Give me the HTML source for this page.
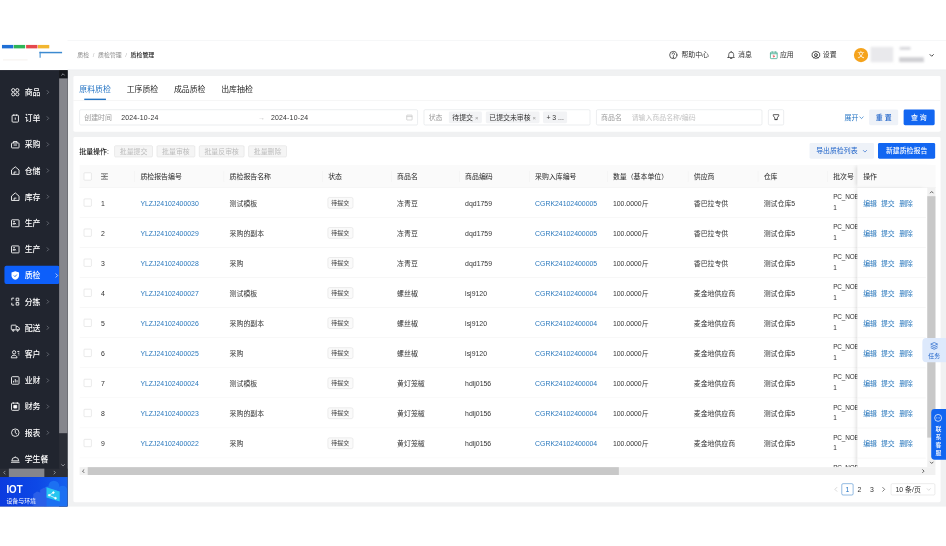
<!DOCTYPE html><html lang="zh-CN"><head><meta charset="utf-8"><title>质检管理</title><style>
*{box-sizing:border-box;margin:0;padding:0}
html,body{width:946px;height:546px;background:#fff;overflow:hidden}
body{font-family:"Liberation Sans","Noto Sans CJK SC",sans-serif;color:#333;position:relative}
#app{position:absolute;left:0;top:40px;width:1920px;height:947px;transform:scale(0.492708);transform-origin:0 0;background:#f0f1f2;overflow:hidden;font-size:14px}
.abs{position:absolute}
svg{display:block}
#side{position:absolute;left:0;top:0;width:137px;height:947px;background:#21252f}
#logo{position:absolute;left:0;top:0;width:138px;height:61px;background:#fff}
#hdr{position:absolute;left:137px;top:0;width:1783px;height:61px;background:#fff;border-bottom:1px solid #e8eaee;border-top:1px solid #eceef1}
.mi{position:absolute;left:9px;width:112px;height:37px;border-radius:4px;color:#fff;font-size:16px;font-weight:500}
.mi .ic{position:absolute;left:12px;top:9.5px;width:20px;height:20px}
.mi .tx{position:absolute;left:41px;top:2px;line-height:35px;white-space:nowrap}
.mi .ch{position:absolute;left:83px;top:14.5px;width:10px;height:10px}
.mi.on .ch{left:101px}
.mi.on{background:#0d5ffa}
.card{position:absolute;background:#fff;border-radius:3px}
.tab{position:absolute;top:15.5px;font-size:16px;line-height:24px;color:#222;white-space:nowrap}
.inp{position:absolute;top:68px;height:32px;border:1px solid #d9dce1;border-radius:3px;background:#fff}
.lbl{position:absolute;top:0;line-height:30px;color:#9a9a9a;font-size:14px;white-space:nowrap}
.val{position:absolute;top:0;line-height:30px;color:#333;font-size:14px;white-space:nowrap}
.tag{position:absolute;top:3px;height:24px;line-height:25px;background:#f2f3f5;border-radius:3px;font-size:14px;color:#333;padding:0 7px;white-space:nowrap}
.btn{position:absolute;height:32px;line-height:32px;border-radius:3px;text-align:center;font-size:14px;white-space:nowrap}
.dbtn{position:absolute;top:17px;height:24px;line-height:22px;border:1px solid #dcdcdc;background:#f5f5f5;color:#bdbdbd;border-radius:3px;text-align:center;font-size:14px;white-space:nowrap}
.th{position:absolute;top:1.5px;height:47px;line-height:47px;font-size:14px;color:#262626;font-weight:400;white-space:nowrap}
.sep{position:absolute;top:13px;width:1px;height:22px;background:#f0f0f0}
.row{position:absolute;left:0;width:1721px;height:61px;border-bottom:1px solid #eeeeee;background:#fff}
.td{position:absolute;top:2px;line-height:60px;font-size:14px;color:#333;white-space:nowrap}
.lk{color:#2a78bd}
.cb{position:absolute;width:16px;height:16px;border:1px solid #d4d4d4;border-radius:2px;background:#fff}
.st{position:absolute;top:19px;height:23px;line-height:21px;border:1px solid #dcdcdc;background:#fafafa;border-radius:4px;font-size:12px;color:#333;padding:0 7px;white-space:nowrap}
.hi{position:absolute;top:0;line-height:60px;font-size:14px;color:#333;white-space:nowrap}
</style></head><body><div id="app">
<div id="side">
<div class="mi" style="top:86.0px"><div class="ic"><svg width="20" height="20" viewBox="0 0 17 17" ><g stroke="#fff" stroke-width="1.5" fill="none" stroke-linejoin="round"><circle cx="5" cy="5" r="2.8"/><circle cx="12" cy="5" r="2.8"/><circle cx="5" cy="12" r="2.8"/><circle cx="12" cy="12" r="2.8"/></g></svg></div><div class="tx">商品</div><div class="ch"><svg width="10" height="10" viewBox="0 0 10 10" ><path d="M3 1l4 4-4 4" stroke="#7d818b" stroke-width="1.400" fill="none"/></svg></div></div>
<div class="mi" style="top:139.2px"><div class="ic"><svg width="20" height="20" viewBox="0 0 17 17" ><g stroke="#fff" stroke-width="1.5" fill="none" stroke-linejoin="round"><rect x="3" y="3" width="11" height="12" rx="1.5"/><path d="M6 1.5v3M11 1.5v3M8.5 7v4"/></g></svg></div><div class="tx">订单</div><div class="ch"><svg width="10" height="10" viewBox="0 0 10 10" ><path d="M3 1l4 4-4 4" stroke="#7d818b" stroke-width="1.400" fill="none"/></svg></div></div>
<div class="mi" style="top:192.4px"><div class="ic"><svg width="20" height="20" viewBox="0 0 17 17" ><g stroke="#fff" stroke-width="1.5" fill="none" stroke-linejoin="round"><rect x="2" y="6" width="13" height="8.5" rx="1"/><path d="M5.5 6V3.5h6V6M5.5 9.5h6"/></g></svg></div><div class="tx">采购</div><div class="ch"><svg width="10" height="10" viewBox="0 0 10 10" ><path d="M3 1l4 4-4 4" stroke="#7d818b" stroke-width="1.400" fill="none"/></svg></div></div>
<div class="mi" style="top:245.6px"><div class="ic"><svg width="20" height="20" viewBox="0 0 17 17" ><g stroke="#fff" stroke-width="1.5" fill="none" stroke-linejoin="round"><path d="M2 7.5L8.5 2 15 7.5V15H2z"/><path d="M6.5 15v-4h4"/></g></svg></div><div class="tx">仓储</div><div class="ch"><svg width="10" height="10" viewBox="0 0 10 10" ><path d="M3 1l4 4-4 4" stroke="#7d818b" stroke-width="1.400" fill="none"/></svg></div></div>
<div class="mi" style="top:298.8px"><div class="ic"><svg width="20" height="20" viewBox="0 0 17 17" ><g stroke="#fff" stroke-width="1.5" fill="none" stroke-linejoin="round"><path d="M2 7.5L8.5 2 15 7.5V15H2z"/><path d="M6.5 15v-4h4"/></g></svg></div><div class="tx">库存</div><div class="ch"><svg width="10" height="10" viewBox="0 0 10 10" ><path d="M3 1l4 4-4 4" stroke="#7d818b" stroke-width="1.400" fill="none"/></svg></div></div>
<div class="mi" style="top:352.0px"><div class="ic"><svg width="20" height="20" viewBox="0 0 17 17" ><g stroke="#fff" stroke-width="1.5" fill="none" stroke-linejoin="round"><rect x="2" y="2.5" width="13" height="12" rx="1"/><path d="M5 11V8l2.5 2V8l2.5 2"/><path d="M5 5.5h3"/></g></svg></div><div class="tx">生产</div><div class="ch"><svg width="10" height="10" viewBox="0 0 10 10" ><path d="M3 1l4 4-4 4" stroke="#7d818b" stroke-width="1.400" fill="none"/></svg></div></div>
<div class="mi" style="top:405.2px"><div class="ic"><svg width="20" height="20" viewBox="0 0 17 17" ><g stroke="#fff" stroke-width="1.5" fill="none" stroke-linejoin="round"><rect x="2" y="2.5" width="13" height="12" rx="1"/><path d="M5 11V8l2.5 2V8l2.5 2"/><path d="M5 5.5h3"/></g></svg></div><div class="tx">生产</div><div class="ch"><svg width="10" height="10" viewBox="0 0 10 10" ><path d="M3 1l4 4-4 4" stroke="#7d818b" stroke-width="1.400" fill="none"/></svg></div></div>
<div class="mi on" style="top:458.4px"><div class="ic"><svg width="20" height="20" viewBox="0 0 17 17" ><path d="M8.5 1L15 3.2v5.3c0 3.6-2.7 6.2-6.5 7.5C4.700 14.700 2 12.100 2 8.500V3.200z" fill="#fff"/><path d="M6 8.500l2 2 3.200-3.600" stroke="#1266f1" stroke-width="1.500" fill="none"/></svg></div><div class="tx">质检</div><div class="ch"><svg width="10" height="10" viewBox="0 0 10 10" ><path d="M3 1l4 4-4 4" stroke="#fff" stroke-width="1.400" fill="none"/></svg></div></div>
<div class="mi" style="top:511.6px"><div class="ic"><svg width="20" height="20" viewBox="0 0 17 17" ><g stroke="#fff" stroke-width="1.5" fill="none" stroke-linejoin="round"><path d="M6.500 2.500H2.500v4M2.500 10.500v4h4"/><rect x="10" y="2.500" width="4.500" height="4.500"/><rect x="10" y="10" width="4.500" height="4.500"/></g></svg></div><div class="tx">分拣</div><div class="ch"><svg width="10" height="10" viewBox="0 0 10 10" ><path d="M3 1l4 4-4 4" stroke="#7d818b" stroke-width="1.400" fill="none"/></svg></div></div>
<div class="mi" style="top:564.8px"><div class="ic"><svg width="20" height="20" viewBox="0 0 17 17" ><g stroke="#fff" stroke-width="1.5" fill="none" stroke-linejoin="round"><rect x="1.500" y="4" width="8.500" height="8" rx="1"/><path d="M10 6.500h3l2.500 2.500v3H10"/><circle cx="5" cy="13.500" r="1.200"/><circle cx="12.500" cy="13.500" r="1.200"/></g></svg></div><div class="tx">配送</div><div class="ch"><svg width="10" height="10" viewBox="0 0 10 10" ><path d="M3 1l4 4-4 4" stroke="#7d818b" stroke-width="1.400" fill="none"/></svg></div></div>
<div class="mi" style="top:618.0px"><div class="ic"><svg width="20" height="20" viewBox="0 0 17 17" ><g stroke="#fff" stroke-width="1.5" fill="none" stroke-linejoin="round"><circle cx="6.500" cy="5" r="2.800"/><path d="M1.500 14.500c0-3 2-4.500 5-4.500s5 1.500 5 4.500z"/><path d="M12 3.500h3.500M13 6.500h2.500M14 9.500h1.500"/></g></svg></div><div class="tx">客户</div><div class="ch"><svg width="10" height="10" viewBox="0 0 10 10" ><path d="M3 1l4 4-4 4" stroke="#7d818b" stroke-width="1.400" fill="none"/></svg></div></div>
<div class="mi" style="top:671.2px"><div class="ic"><svg width="20" height="20" viewBox="0 0 17 17" ><g stroke="#fff" stroke-width="1.5" fill="none" stroke-linejoin="round"><rect x="2" y="2" width="13" height="13" rx="1.500"/><path d="M5.500 12V9M8.500 12V6M11.500 12V8"/></g></svg></div><div class="tx">业财</div><div class="ch"><svg width="10" height="10" viewBox="0 0 10 10" ><path d="M3 1l4 4-4 4" stroke="#7d818b" stroke-width="1.400" fill="none"/></svg></div></div>
<div class="mi" style="top:724.4px"><div class="ic"><svg width="20" height="20" viewBox="0 0 17 17" ><g stroke="#fff" stroke-width="1.5" fill="none" stroke-linejoin="round"><rect x="2" y="2.500" width="13" height="12.500" rx="1.500"/><rect x="6" y="6.500" width="5" height="4.500" fill="#fff"/><path d="M5 1v3M12 1v3"/></g></svg></div><div class="tx">财务</div><div class="ch"><svg width="10" height="10" viewBox="0 0 10 10" ><path d="M3 1l4 4-4 4" stroke="#7d818b" stroke-width="1.400" fill="none"/></svg></div></div>
<div class="mi" style="top:777.6px"><div class="ic"><svg width="20" height="20" viewBox="0 0 17 17" ><g stroke="#fff" stroke-width="1.5" fill="none" stroke-linejoin="round"><circle cx="8.500" cy="8.500" r="6.500"/><path d="M8.500 4v4.500l3 2.500"/></g></svg></div><div class="tx">报表</div><div class="ch"><svg width="10" height="10" viewBox="0 0 10 10" ><path d="M3 1l4 4-4 4" stroke="#7d818b" stroke-width="1.400" fill="none"/></svg></div></div>
<div class="mi" style="top:830.8px"><div class="ic"><svg width="20" height="20" viewBox="0 0 17 17" ><g stroke="#fff" stroke-width="1.5" fill="none" stroke-linejoin="round"><path d="M2.500 12a6 6 0 0 1 12 0z"/><path d="M1 14.500h15M8.500 4.500v1.500"/></g></svg></div><div class="tx">学生餐</div></div>
<div class="abs" style="left:120px;top:61px;width:17px;height:890px;background:#2b2e37"></div>
<div class="abs" style="left:120px;top:61px;width:17px;height:17px;background:#15171c"></div>
<div class="abs" style="left:123px;top:65px;width:10px;height:10px"><svg width="10" height="10" viewBox="0 0 10 10" ><path d="M1.500 7l3.500-3.500L8.500 7" stroke="#9a9ca3" stroke-width="1.800" fill="none"/></svg></div>
<div class="abs" style="left:120px;top:78px;width:17px;height:720px;background:#85868c"></div>
<div class="abs" style="left:123px;top:858px;width:10px;height:10px"><svg width="10" height="10" viewBox="0 0 10 10" ><path d="M1.500 3l3.500 3.500L8.500 3" stroke="#9a9ca3" stroke-width="1.800" fill="none"/></svg></div>
<div class="abs" style="left:0;top:870px;width:137px;height:17px;background:#2b2e37"></div>
<div class="abs" style="left:18px;top:870px;width:72px;height:17px;background:#85868c"></div>
<div class="abs" style="left:4px;top:873px;width:10px;height:10px"><svg width="10" height="10" viewBox="0 0 10 10" ><path d="M7 1.500L3.500 5 7 8.500" stroke="#9a9ca3" stroke-width="1.800" fill="none"/></svg></div>
<div class="abs" style="left:106px;top:873px;width:10px;height:10px"><svg width="10" height="10" viewBox="0 0 10 10" ><path d="M3 1.500L6.500 5 3 8.500" stroke="#9a9ca3" stroke-width="1.800" fill="none"/></svg></div>
<div class="abs" style="left:0;top:887px;width:137px;height:61px;background:linear-gradient(90deg,#0b3bdf 0%,#0d48e6 55%,#1560ee 100%);overflow:hidden">
<div class="abs" style="left:0;top:0;width:137px;height:60px"><svg width="137" height="60" viewBox="0 0 137 60" ><circle cx="109.400" cy="18.500" r="11" fill="#1c70f2"/><circle cx="127" cy="27" r="9.500" fill="#1c70f2"/><circle cx="97" cy="27" r="8" fill="#1c70f2"/><rect x="89" y="27" width="48" height="33" fill="#1c70f2"/><path d="M67.600 60V34.300l7.500-4.900 6.400 2.100v-5.300l7.500-4.300 5.400 2.100V60z" fill="#2a5fe8"/><path d="M94.400 20.800l26.800 8.600v20.400l-26.800-8.200z" fill="#27c6f1"/><g stroke="#fff" stroke-width="1.500" fill="#fff"><path d="M99.800 36.900l8.600-5.400M99.800 36.900l12.900 6" fill="none"/><circle cx="99.800" cy="36.900" r="1.700"/><circle cx="108.400" cy="31.500" r="1.700"/><circle cx="112.700" cy="42.900" r="1.700"/></g></svg></div>
<div class="abs" style="left:13px;top:12px;font-size:23px;line-height:24px;font-weight:bold;color:#fff;transform:scaleX(.86);transform-origin:0 0">IOT</div>
<div class="abs" style="left:13px;top:41px;font-size:12px;line-height:14px;color:#fff;white-space:nowrap">设备与环境</div>
</div>
<div id="logo">
<div class="abs" style="left:4px;top:10px;width:23px;height:7px;background:#1f6fd6"></div>
<div class="abs" style="left:28px;top:10px;width:23px;height:7px;background:#2fb457"></div>
<div class="abs" style="left:53px;top:10px;width:23px;height:7px;background:#e5484d"></div>
<div class="abs" style="left:77px;top:10px;width:23px;height:7px;background:#f2b630"></div>
<div class="abs" style="left:80px;top:24px;width:46px;height:3px;background:#3b8ad0"></div>
<div class="abs" style="left:80px;top:24px;width:3px;height:12px;background:#3b8ad0;opacity:.7"></div>
<div class="abs" style="left:6px;top:40px;width:50px;height:1px;background:#e9e2da"></div>
</div>
</div>
<div id="hdr">
<div class="abs" style="left:20px;top:0;line-height:59px;font-size:12px;color:#8c8c8c;white-space:nowrap">质检 <span style="margin:0 4px;color:#bbb">/</span> 质检管理 <span style="margin:0 4px;color:#bbb">/</span> <span style="color:#222;font-weight:500">质检管理</span></div>
<div class="abs" style="left:1220px;top:20px;width:18px;height:18px"><svg width="19" height="19" viewBox="0 0 18 18" ><g stroke="#333" stroke-width="1.500" fill="none" stroke-linecap="round" stroke-linejoin="round"><circle cx="9" cy="9" r="7"/><path d="M6.800 7a2.300 2.300 0 1 1 3.400 2c-.8.500-1.200 1-1.200 2"/><circle cx="9" cy="13.200" r=".5"/></g></svg></div>
<div class="abs" style="left:1246px;top:0;line-height:59px;font-size:14px;color:#333;white-space:nowrap">帮助中心</div>
<div class="abs" style="left:1338px;top:20px;width:18px;height:18px"><svg width="18" height="18" viewBox="0 0 18 18" ><g stroke="#333" stroke-width="1.500" fill="none" stroke-linecap="round" stroke-linejoin="round"><path d="M4 13V8.500a5 5 0 0 1 10 0V13l1.500 1.500h-13z"/><path d="M7.500 16.500h3M9 2v1.500"/></g></svg></div>
<div class="abs" style="left:1361px;top:0;line-height:59px;font-size:14px;color:#333;white-space:nowrap">消息</div>
<div class="abs" style="left:1424px;top:20px;width:18px;height:18px"><svg width="19" height="19" viewBox="0 0 18 18" ><g stroke="#3aa58a" stroke-width="1.500" fill="none" stroke-linejoin="round"><rect x="2.500" y="3.500" width="13" height="12.500" rx="1.500"/><path d="M2.500 6.500h13M6 2v2.500M12 2v2.500"/><path d="M9 8.500v4.500M7 11l2 2 2-2" stroke="#e5484d"/></g></svg></div>
<div class="abs" style="left:1446px;top:0;line-height:59px;font-size:14px;color:#333;white-space:nowrap">应用</div>
<div class="abs" style="left:1509px;top:20px;width:18px;height:18px"><svg width="20" height="20" viewBox="0 0 18 18" ><g stroke="#333" stroke-width="1.500" fill="none" stroke-linecap="round" stroke-linejoin="round"><path d="M9 1.800l2 1.100 2.300-.2 1 2.100 1.900 1.300-.5 2.200.5 2.300-1.900 1.300-1 2.100-2.300-.2-2 1.100-2-1.100-2.300.2-1-2.100L1.800 10.600l.5-2.300-.5-2.200 1.900-1.300 1-2.100 2.300.2z"/><circle cx="9" cy="8.400" r="2.600"/><path d="M5.500 13.500c.8-1.600 2-2.300 3.500-2.300s2.700.7 3.500 2.300"/></g></svg></div>
<div class="abs" style="left:1533px;top:0;line-height:59px;font-size:14px;color:#333;white-space:nowrap">设置</div>
<div class="abs" style="left:1596px;top:15px;width:29px;height:29px;border-radius:50%;background:#f5a31c;color:#fff;font-size:14px;line-height:29px;text-align:center">文</div>
<div class="abs" style="left:1630px;top:13px;width:46px;height:31px;background:#e9e9ec;filter:blur(2px)"></div>
<div class="abs" style="left:1688px;top:34px;width:50px;height:10px;background:#cfcfd3;filter:blur(2px)"></div>
<div class="abs" style="left:1689px;top:13px;width:22px;height:6px;background:#d8d8dc;filter:blur(2px)"></div>
<div class="abs" style="left:1748px;top:24px;width:12px;height:12px"><svg width="12" height="12" viewBox="0 0 12 12" ><path d="M2 4l4 4 4-4" stroke="#333" stroke-width="1.800" fill="none"/></svg></div>
</div>
<div class="card" style="left:149px;top:73px;width:1760px;height:113px">
<div class="tab" style="left:12px;color:#2474c4;">原料质检</div>
<div class="tab" style="left:108px;">工序质检</div>
<div class="tab" style="left:204px;">成品质检</div>
<div class="tab" style="left:300px;">出库抽检</div>
<div class="abs" style="left:22px;top:46px;width:44px;height:3px;background:#2474c4"></div>
<div class="abs" style="left:0;top:49px;width:1759px;height:1px;background:#ececec"></div>
<div class="inp" style="left:12px;width:687px"><div class="lbl" style="left:9px">创建时间</div><div class="val" style="left:84px;letter-spacing:.4px">2024-10-24</div><div class="val" style="left:362px;color:#c4c4c4">→</div><div class="val" style="left:388px;letter-spacing:.4px">2024-10-24</div>
<div class="abs" style="left:662px;top:8px;width:14px;height:14px"><svg width="14" height="14" viewBox="0 0 14 14" ><g stroke="#b8b8b8" stroke-width="1.200" fill="none"><rect x="1.500" y="2.500" width="11" height="10" rx="1"/><path d="M1.500 5.500h11"/></g></svg></div></div>
<div class="inp" style="left:711px;width:338px"><div class="lbl" style="left:9px">状态</div>
<div class="tag" style="left:50px">待提交 <span style="color:#999;font-size:12px">×</span></div>
<div class="tag" style="left:125px">已提交未审核 <span style="color:#999;font-size:12px">×</span></div>
<div class="tag" style="left:241px">+ 3 ...</div></div>
<div class="inp" style="left:1061px;width:337px"><div class="lbl" style="left:9px">商品名</div><div class="val" style="left:71px;color:#c4c4c4">请输入商品名称/编码</div></div>
<div class="inp" style="left:1410px;width:32px"><div class="abs" style="left:7px;top:7px;width:16px;height:16px"><svg width="16" height="16" viewBox="0 0 16 16" ><g stroke="#333" stroke-width="1.600" fill="none" stroke-linejoin="round"><path d="M2.500 2.500h11v2.500l-3 4v3.500h-5v-3.500l-3-4z"/><path d="M5.500 12.500h5"/></g></svg></div></div>
<div class="abs" style="left:1565px;top:68px;line-height:32px;font-size:14px;color:#2474c4;white-space:nowrap">展开<span style="display:inline-block;vertical-align:-1px;margin-left:1px"><svg width="11" height="11" viewBox="0 0 11 11" ><path d="M1.500 3.500l4 4 4-4" stroke="#2474c4" stroke-width="1.400" fill="none"/></svg></span></div>
<div class="btn" style="left:1615px;top:68px;width:59px;background:#eef2f8;color:#1f63c9;font-weight:500">重 置</div>
<div class="btn" style="left:1684.5px;top:68px;width:63px;background:#1266f1;color:#fff;font-weight:500">查 询</div>
</div>
<div class="card" style="left:149px;top:197px;width:1760px;height:741px">
<div class="abs" style="left:12px;top:17px;line-height:24px;font-size:14px;color:#222;font-weight:500;white-space:nowrap">批量操作:</div>
<div class="dbtn" style="left:83px;width:78px">批量提交</div>
<div class="dbtn" style="left:169px;width:78px">批量审核</div>
<div class="dbtn" style="left:255px;width:92px">批量反审核</div>
<div class="dbtn" style="left:355px;width:78px">批量删除</div>
<div class="btn" style="left:1494px;top:12px;width:131px;background:#eef2f8;color:#1f63c9">导出质检列表<span style="display:inline-block;vertical-align:-1px;margin-left:9px"><svg width="11" height="11" viewBox="0 0 11 11" ><path d="M1.500 3.500l4 4 4-4" stroke="#1f63c9" stroke-width="1.300" fill="none"/></svg></span></div>
<div class="btn" style="left:1633px;top:12px;width:116px;background:#1266f1;color:#fff;font-weight:500">新建质检报告</div>
<div class="abs" style="left:12px;top:56px;width:1738px;height:630px;overflow:hidden">
<div class="abs" style="left:0;top:0;width:1738px;height:47px;background:#fafafa;border-bottom:1px solid #ececec"></div>
<div class="cb" style="left:9px;top:16px"></div>
<div class="abs" style="left:43px;top:16px;width:16px;height:16px"><svg width="16" height="16" viewBox="0 0 16 16" ><g stroke="#333" stroke-width="1.300" fill="none"><path d="M1 2.500h14M1 8h14M1 13.500h14M5.500 4.300l2.500 2 2.500-2M5.500 11.700l2.500-2 2.500 2"/></g></svg></div>
<div class="th" style="left:124px">质检报告编号</div>
<div class="sep" style="left:112px"></div>
<div class="th" style="left:305px">质检报告名称</div>
<div class="sep" style="left:293px"></div>
<div class="th" style="left:505px">状态</div>
<div class="sep" style="left:493px"></div>
<div class="th" style="left:645px">商品名</div>
<div class="sep" style="left:633px"></div>
<div class="th" style="left:783px">商品编码</div>
<div class="sep" style="left:771px"></div>
<div class="th" style="left:925px">采购入库编号</div>
<div class="sep" style="left:913px"></div>
<div class="th" style="left:1083px">数量（基本单位）</div>
<div class="sep" style="left:1071px"></div>
<div class="th" style="left:1247px">供应商</div>
<div class="sep" style="left:1235px"></div>
<div class="th" style="left:1389px">仓库</div>
<div class="sep" style="left:1377px"></div>
<div class="th" style="left:1530px">批次号</div>
<div class="sep" style="left:1518px"></div>
<div class="abs" style="left:0;top:47px;width:1721px;height:567px;overflow:hidden;background:#fff">
<div class="row" style="top:0px">
<div class="cb" style="left:9px;top:22px"></div>
<div class="td" style="left:44px">1</div>
<div class="td lk" style="left:124px">YLZJ24102400030</div>
<div class="td" style="left:305px">测试模板</div>
<div class="st" style="left:503.5px">待提交</div>
<div class="td" style="left:645px">冻青豆</div>
<div class="td" style="left:783px">dqd1759</div>
<div class="td lk" style="left:925px">CGRK24102400005</div>
<div class="td" style="left:1083px">100.0000斤</div>
<div class="td" style="left:1247px">香巴拉专供</div>
<div class="td" style="left:1389px">测试仓库5</div>
<div class="td" style="left:1530px;top:8px;line-height:22px;white-space:normal;width:80px;font-size:13px;letter-spacing:-0.3px">PC_NOB<br>1</div>
</div>
<div class="row" style="top:61px">
<div class="cb" style="left:9px;top:22px"></div>
<div class="td" style="left:44px">2</div>
<div class="td lk" style="left:124px">YLZJ24102400029</div>
<div class="td" style="left:305px">采购的副本</div>
<div class="st" style="left:503.5px">待提交</div>
<div class="td" style="left:645px">冻青豆</div>
<div class="td" style="left:783px">dqd1759</div>
<div class="td lk" style="left:925px">CGRK24102400005</div>
<div class="td" style="left:1083px">100.0000斤</div>
<div class="td" style="left:1247px">香巴拉专供</div>
<div class="td" style="left:1389px">测试仓库5</div>
<div class="td" style="left:1530px;top:8px;line-height:22px;white-space:normal;width:80px;font-size:13px;letter-spacing:-0.3px">PC_NOB<br>1</div>
</div>
<div class="row" style="top:122px">
<div class="cb" style="left:9px;top:22px"></div>
<div class="td" style="left:44px">3</div>
<div class="td lk" style="left:124px">YLZJ24102400028</div>
<div class="td" style="left:305px">采购</div>
<div class="st" style="left:503.5px">待提交</div>
<div class="td" style="left:645px">冻青豆</div>
<div class="td" style="left:783px">dqd1759</div>
<div class="td lk" style="left:925px">CGRK24102400005</div>
<div class="td" style="left:1083px">100.0000斤</div>
<div class="td" style="left:1247px">香巴拉专供</div>
<div class="td" style="left:1389px">测试仓库5</div>
<div class="td" style="left:1530px;top:8px;line-height:22px;white-space:normal;width:80px;font-size:13px;letter-spacing:-0.3px">PC_NOB<br>1</div>
</div>
<div class="row" style="top:183px">
<div class="cb" style="left:9px;top:22px"></div>
<div class="td" style="left:44px">4</div>
<div class="td lk" style="left:124px">YLZJ24102400027</div>
<div class="td" style="left:305px">测试模板</div>
<div class="st" style="left:503.5px">待提交</div>
<div class="td" style="left:645px">螺丝椒</div>
<div class="td" style="left:783px">lsj9120</div>
<div class="td lk" style="left:925px">CGRK24102400004</div>
<div class="td" style="left:1083px">100.0000斤</div>
<div class="td" style="left:1247px">麦金地供应商</div>
<div class="td" style="left:1389px">测试仓库5</div>
<div class="td" style="left:1530px;top:8px;line-height:22px;white-space:normal;width:80px;font-size:13px;letter-spacing:-0.3px">PC_NOB<br>1</div>
</div>
<div class="row" style="top:244px">
<div class="cb" style="left:9px;top:22px"></div>
<div class="td" style="left:44px">5</div>
<div class="td lk" style="left:124px">YLZJ24102400026</div>
<div class="td" style="left:305px">采购的副本</div>
<div class="st" style="left:503.5px">待提交</div>
<div class="td" style="left:645px">螺丝椒</div>
<div class="td" style="left:783px">lsj9120</div>
<div class="td lk" style="left:925px">CGRK24102400004</div>
<div class="td" style="left:1083px">100.0000斤</div>
<div class="td" style="left:1247px">麦金地供应商</div>
<div class="td" style="left:1389px">测试仓库5</div>
<div class="td" style="left:1530px;top:8px;line-height:22px;white-space:normal;width:80px;font-size:13px;letter-spacing:-0.3px">PC_NOB<br>1</div>
</div>
<div class="row" style="top:305px">
<div class="cb" style="left:9px;top:22px"></div>
<div class="td" style="left:44px">6</div>
<div class="td lk" style="left:124px">YLZJ24102400025</div>
<div class="td" style="left:305px">采购</div>
<div class="st" style="left:503.5px">待提交</div>
<div class="td" style="left:645px">螺丝椒</div>
<div class="td" style="left:783px">lsj9120</div>
<div class="td lk" style="left:925px">CGRK24102400004</div>
<div class="td" style="left:1083px">100.0000斤</div>
<div class="td" style="left:1247px">麦金地供应商</div>
<div class="td" style="left:1389px">测试仓库5</div>
<div class="td" style="left:1530px;top:8px;line-height:22px;white-space:normal;width:80px;font-size:13px;letter-spacing:-0.3px">PC_NOB<br>1</div>
</div>
<div class="row" style="top:366px">
<div class="cb" style="left:9px;top:22px"></div>
<div class="td" style="left:44px">7</div>
<div class="td lk" style="left:124px">YLZJ24102400024</div>
<div class="td" style="left:305px">测试模板</div>
<div class="st" style="left:503.5px">待提交</div>
<div class="td" style="left:645px">黄灯笼椒</div>
<div class="td" style="left:783px">hdlj0156</div>
<div class="td lk" style="left:925px">CGRK24102400004</div>
<div class="td" style="left:1083px">100.0000斤</div>
<div class="td" style="left:1247px">麦金地供应商</div>
<div class="td" style="left:1389px">测试仓库5</div>
<div class="td" style="left:1530px;top:8px;line-height:22px;white-space:normal;width:80px;font-size:13px;letter-spacing:-0.3px">PC_NOB<br>1</div>
</div>
<div class="row" style="top:427px">
<div class="cb" style="left:9px;top:22px"></div>
<div class="td" style="left:44px">8</div>
<div class="td lk" style="left:124px">YLZJ24102400023</div>
<div class="td" style="left:305px">采购的副本</div>
<div class="st" style="left:503.5px">待提交</div>
<div class="td" style="left:645px">黄灯笼椒</div>
<div class="td" style="left:783px">hdlj0156</div>
<div class="td lk" style="left:925px">CGRK24102400004</div>
<div class="td" style="left:1083px">100.0000斤</div>
<div class="td" style="left:1247px">麦金地供应商</div>
<div class="td" style="left:1389px">测试仓库5</div>
<div class="td" style="left:1530px;top:8px;line-height:22px;white-space:normal;width:80px;font-size:13px;letter-spacing:-0.3px">PC_NOB<br>1</div>
</div>
<div class="row" style="top:488px">
<div class="cb" style="left:9px;top:22px"></div>
<div class="td" style="left:44px">9</div>
<div class="td lk" style="left:124px">YLZJ24102400022</div>
<div class="td" style="left:305px">采购</div>
<div class="st" style="left:503.5px">待提交</div>
<div class="td" style="left:645px">黄灯笼椒</div>
<div class="td" style="left:783px">hdlj0156</div>
<div class="td lk" style="left:925px">CGRK24102400004</div>
<div class="td" style="left:1083px">100.0000斤</div>
<div class="td" style="left:1247px">麦金地供应商</div>
<div class="td" style="left:1389px">测试仓库5</div>
<div class="td" style="left:1530px;top:8px;line-height:22px;white-space:normal;width:80px;font-size:13px;letter-spacing:-0.3px">PC_NOB<br>1</div>
</div>
<div class="row" style="top:549px">
<div class="cb" style="left:9px;top:22px"></div>
<div class="td" style="left:44px">10</div>
<div class="td lk" style="left:124px">YLZJ24102400021</div>
<div class="td" style="left:305px">测试模板</div>
<div class="st" style="left:503.5px">待提交</div>
<div class="td" style="left:645px">黄灯笼椒</div>
<div class="td" style="left:783px">hdlj0156</div>
<div class="td lk" style="left:925px">CGRK24102400004</div>
<div class="td" style="left:1083px">100.0000斤</div>
<div class="td" style="left:1247px">麦金地供应商</div>
<div class="td" style="left:1389px">测试仓库5</div>
<div class="td" style="left:1530px;top:8px;line-height:22px;white-space:normal;width:80px;font-size:13px;letter-spacing:-0.3px">PC_NOB<br>1</div>
</div>
</div>
<div class="abs" style="left:1579px;top:0;width:159px;height:47px;background:#fafafa;border-bottom:1px solid #ececec;box-shadow:-6px 0 8px -3px rgba(0,0,0,.13)"></div>
<div class="abs" style="left:1579px;top:47px;width:142px;height:567px;background:#fff;box-shadow:-6px 0 8px -3px rgba(0,0,0,.13);overflow:hidden">
<div class="abs" style="left:0;top:0px;width:139px;height:61px;border-bottom:1px solid #eee"><div class="td lk" style="left:12px">编辑</div><div class="td lk" style="left:48px">提交</div><div class="td lk" style="left:85px">删除</div></div>
<div class="abs" style="left:0;top:61px;width:139px;height:61px;border-bottom:1px solid #eee"><div class="td lk" style="left:12px">编辑</div><div class="td lk" style="left:48px">提交</div><div class="td lk" style="left:85px">删除</div></div>
<div class="abs" style="left:0;top:122px;width:139px;height:61px;border-bottom:1px solid #eee"><div class="td lk" style="left:12px">编辑</div><div class="td lk" style="left:48px">提交</div><div class="td lk" style="left:85px">删除</div></div>
<div class="abs" style="left:0;top:183px;width:139px;height:61px;border-bottom:1px solid #eee"><div class="td lk" style="left:12px">编辑</div><div class="td lk" style="left:48px">提交</div><div class="td lk" style="left:85px">删除</div></div>
<div class="abs" style="left:0;top:244px;width:139px;height:61px;border-bottom:1px solid #eee"><div class="td lk" style="left:12px">编辑</div><div class="td lk" style="left:48px">提交</div><div class="td lk" style="left:85px">删除</div></div>
<div class="abs" style="left:0;top:305px;width:139px;height:61px;border-bottom:1px solid #eee"><div class="td lk" style="left:12px">编辑</div><div class="td lk" style="left:48px">提交</div><div class="td lk" style="left:85px">删除</div></div>
<div class="abs" style="left:0;top:366px;width:139px;height:61px;border-bottom:1px solid #eee"><div class="td lk" style="left:12px">编辑</div><div class="td lk" style="left:48px">提交</div><div class="td lk" style="left:85px">删除</div></div>
<div class="abs" style="left:0;top:427px;width:139px;height:61px;border-bottom:1px solid #eee"><div class="td lk" style="left:12px">编辑</div><div class="td lk" style="left:48px">提交</div><div class="td lk" style="left:85px">删除</div></div>
<div class="abs" style="left:0;top:488px;width:139px;height:61px;border-bottom:1px solid #eee"><div class="td lk" style="left:12px">编辑</div><div class="td lk" style="left:48px">提交</div><div class="td lk" style="left:85px">删除</div></div>
<div class="abs" style="left:0;top:549px;width:139px;height:61px;border-bottom:1px solid #eee"><div class="td lk" style="left:12px">编辑</div><div class="td lk" style="left:48px">提交</div><div class="td lk" style="left:85px">删除</div></div>
</div>
<div class="th" style="left:1591px">操作</div>
<div class="abs" style="left:1721px;top:47px;width:17px;height:567px;background:#f1f1f1"></div>
<div class="abs" style="left:1721px;top:64px;width:17px;height:490px;background:#c8c8c8"></div>
<div class="abs" style="left:1725px;top:51px;width:10px;height:10px"><svg width="10" height="10" viewBox="0 0 10 10" ><path d="M1.500 7l3.500-3.500L8.500 7" stroke="#505050" stroke-width="1.800" fill="none"/></svg></div>
<div class="abs" style="left:1725px;top:600px;width:10px;height:10px"><svg width="10" height="10" viewBox="0 0 10 10" ><path d="M1.500 3l3.500 3.500L8.500 3" stroke="#505050" stroke-width="1.800" fill="none"/></svg></div>
<div class="abs" style="left:0;top:614px;width:1738px;height:16px;background:#f1f1f1"></div>
<div class="abs" style="left:17px;top:614px;width:1078px;height:16px;background:#c8c8c8"></div>
<div class="abs" style="left:3px;top:617px;width:10px;height:10px"><svg width="10" height="10" viewBox="0 0 10 10" ><path d="M7 1.500L3.500 5 7 8.500" stroke="#505050" stroke-width="1.800" fill="none"/></svg></div>
<div class="abs" style="left:1708px;top:617px;width:10px;height:10px"><svg width="10" height="10" viewBox="0 0 10 10" ><path d="M3 1.500L6.500 5 3 8.500" stroke="#505050" stroke-width="1.800" fill="none"/></svg></div>
</div>
<div class="abs" style="left:1541px;top:703px;width:14px;height:24px"><svg width="14" height="24" viewBox="0 0 14 24" ><path d="M9 7.500L4.500 12 9 16.500" stroke="#c8c8c8" stroke-width="1.400" fill="none"/></svg></div>
<div class="abs" style="left:1559px;top:703px;width:24px;height:24px;border:1px solid #2474c4;border-radius:3px;line-height:22px;text-align:center;color:#2474c4;font-size:14px">1</div>
<div class="abs" style="left:1583.5px;top:703px;width:24px;line-height:24px;text-align:center;font-size:14px;color:#333">2</div>
<div class="abs" style="left:1608.5px;top:703px;width:24px;line-height:24px;text-align:center;font-size:14px;color:#333">3</div>
<div class="abs" style="left:1637px;top:703px;width:14px;height:24px"><svg width="14" height="24" viewBox="0 0 14 24" ><path d="M5 7.500L9.500 12 5 16.500" stroke="#444" stroke-width="1.400" fill="none"/></svg></div>
<div class="abs" style="left:1658.5px;top:703px;width:90px;height:24px;border:1px solid #d9d9d9;border-radius:3px;line-height:22px;font-size:14px;color:#333;padding-left:9px;white-space:nowrap">10 条/页<span style="position:absolute;right:7px;top:0"><svg width="10" height="22" viewBox="0 0 10 22" ><path d="M1 9l4 4 4-4" stroke="#c4c4c4" stroke-width="1.300" fill="none"/></svg></span></div>
</div>
<div class="abs" style="left:1872px;top:605px;width:48px;height:49px;background:#dde9fc;border-radius:8px 0 0 8px">
<div class="abs" style="left:15px;top:7px;width:18px;height:18px"><svg width="18" height="18" viewBox="0 0 18 18" ><g stroke="#1f63c9" stroke-width="1.400" fill="none" stroke-linejoin="round"><path d="M9 2l7 3.200-7 3.200-7-3.200z"/><path d="M2 9l7 3.200L16 9M2 12.500l7 3.200 7-3.200"/></g></svg></div>
<div class="abs" style="left:0;top:28px;width:48px;text-align:center;font-size:12px;line-height:16px;color:#1f63c9">任务</div></div>
<div class="abs" style="left:1890px;top:749px;width:30px;height:103px;background:#1266f1;border-radius:7px 0 0 7px">
<div class="abs" style="left:5px;top:9px;width:18px;height:18px"><svg width="18" height="18" viewBox="0 0 18 18" ><circle cx="9" cy="9" r="7" stroke="#fff" stroke-width="1.500" fill="none"/><path d="M6 9h.010M9 9h.010M12 9h.010" stroke="#fff" stroke-width="1.500" stroke-linecap="round"/></svg></div>
<div class="abs" style="left:0;top:32.5px;width:29px;text-align:center;font-size:12px;line-height:16.3px;color:#fff;font-weight:500">联<br>系<br>客<br>服</div></div>
</div></body></html>
